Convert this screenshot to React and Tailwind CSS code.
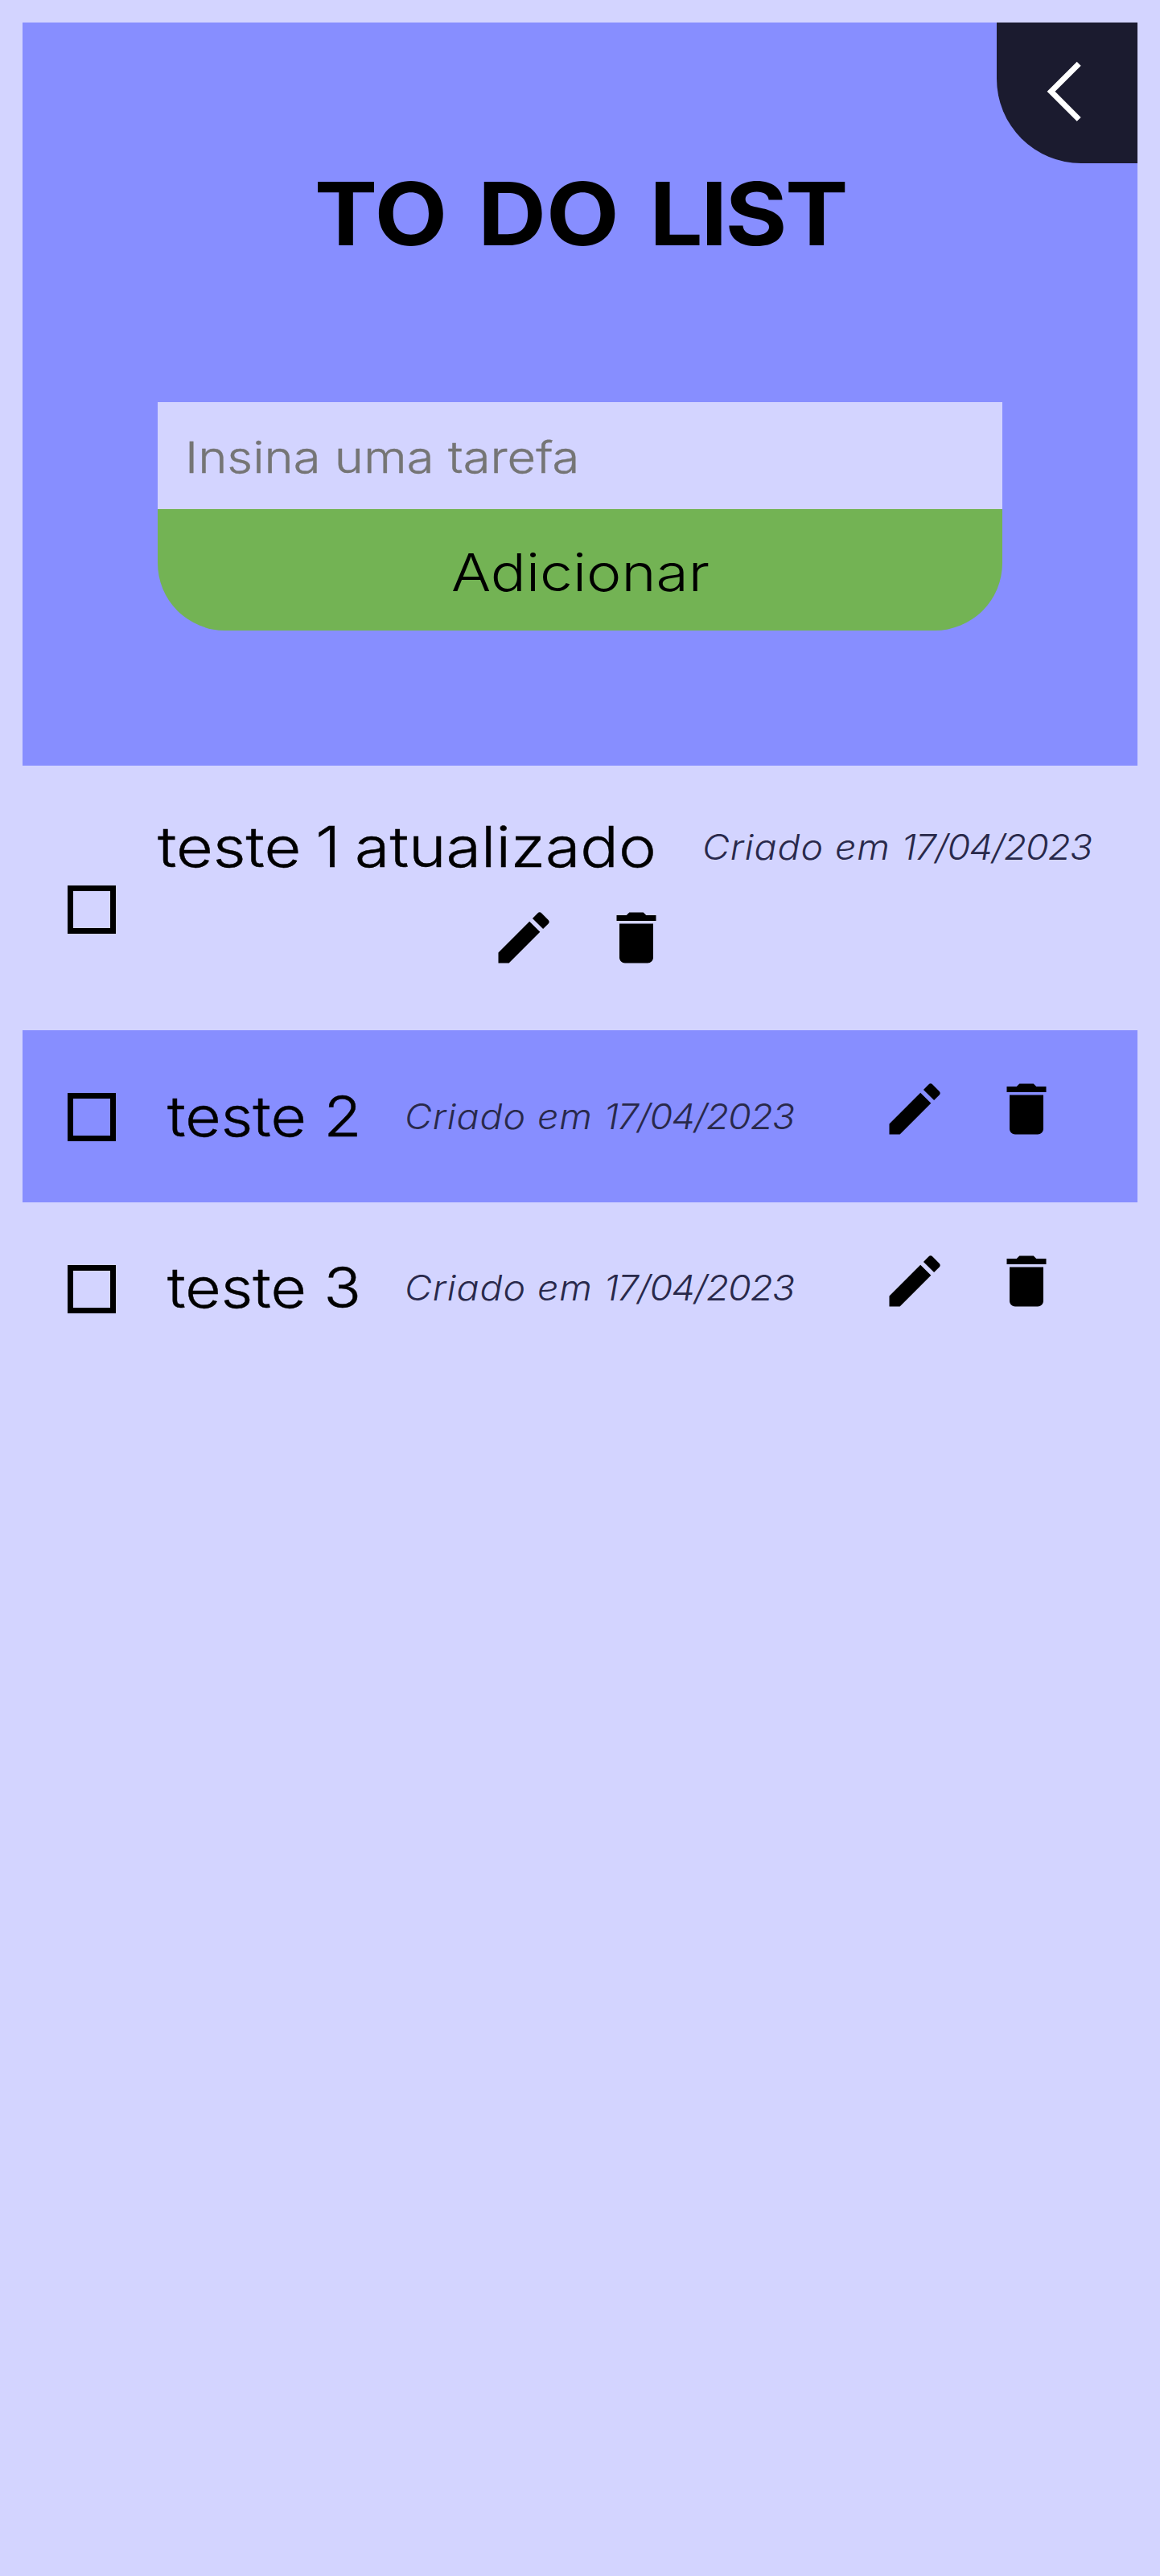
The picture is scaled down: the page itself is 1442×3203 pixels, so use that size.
import React from "react";
import { MdEdit, MdDelete } from "react-icons/md";

function Checkbox({ className }) {
  return (
    <button
      type="button"
      role="checkbox"
      aria-checked="false"
      className={"h-[60px] w-[60px] shrink-0 border-[7px] border-black " + className}
    />
  );
}

function TaskName({ children, width, scale }) {
  return (
    <div className={"shrink-0 " + width}>
      <span
        className={
          "inline-block origin-left whitespace-nowrap text-[70px] leading-[84px] font-light text-black [-webkit-text-stroke:0.5px_black] " +
          scale
        }
      >
        {children}
      </span>
    </div>
  );
}

function CreatedAt({ date }) {
  return (
    <div className="w-[484px] shrink-0">
      <span className="inline-block origin-left scale-x-[1.083] whitespace-nowrap text-[43px] leading-[54px] font-light text-[#29294b] italic">
        <span className="tracking-[0.8px]">Criado em </span>
        <span className="tracking-[-1.2px]">{date}</span>
      </span>
    </div>
  );
}

function Actions({ className }) {
  return (
    <div className={"flex text-black " + className}>
      <button type="button" aria-label="Editar">
        <MdEdit size={84} />
      </button>
      <button type="button" aria-label="Excluir">
        <MdDelete size={84} />
      </button>
    </div>
  );
}

function TaskRow({ name, date, className }) {
  return (
    <li className={"flex h-[213.5px] items-center pl-14 " + className}>
      <Checkbox className="mt-[3px]" />
      <div className="ml-[64px] flex items-center">
        <TaskName width="w-[295px]" scale="scale-x-[1.095]">
          {name}
        </TaskName>
        <CreatedAt date={date} />
      </div>
      <Actions className="mt-[-17px] ml-[107.5px] gap-[55.5px]" />
    </li>
  );
}

export default function App() {
  return (
    <div className="min-h-[3203px] w-[1442px] bg-[#d3d4ff] p-7 font-['Inter',sans-serif]">
      <header className="relative flex h-[924px] flex-col items-center bg-[#878eff] pt-[170px]">
        <button
          type="button"
          aria-label="Voltar"
          className="absolute top-0 right-0 h-[175px] w-[175px] rounded-bl-[105px] bg-[#1b1b2f]"
        >
          <svg viewBox="0 0 175 175" fill="none" stroke="#fff" strokeWidth="7">
            <path d="M102.2 51.2 67.6 85.8l34.6 34.6" />
          </svg>
        </button>

        <h1 className="scale-x-[1.09] text-[108px] leading-[136px] font-bold [word-spacing:9px] whitespace-nowrap text-black">
          TO DO <span className="tracking-[-2.5px]">LIST</span>
        </h1>

        <form className="mt-[166.4px] w-[1050px]">
          <div className="h-[133px] bg-[#d3d4ff] pl-[34px]">
            <input
              type="text"
              placeholder="Insina uma tarefa"
              className="h-[136px] w-[880px] origin-left scale-x-[1.14] bg-transparent text-[54px] font-light outline-none placeholder:text-[#757575] placeholder:[-webkit-text-stroke:0.4px_#757575]"
            />
          </div>
          <button type="button" className="h-[150.6px] w-full rounded-b-[84px] bg-[#73b354] text-black">
            <span className="inline-block scale-x-[1.135] pt-[6px] text-[64.5px] leading-[78px] font-light">Adicionar</span>
          </button>
        </form>
      </header>

      <ul>
        <li className="flex h-[329px] items-center pl-14">
          <Checkbox className="mt-[28px]" />
          <div className="ml-[52px] flex flex-col self-start pt-[58.5px]">
            <div className="flex items-center">
              <TaskName width="w-[677px]" scale="scale-x-[1.13] [word-spacing:-4px]">
                teste 1 atualizado
              </TaskName>
              <CreatedAt date="17/04/2023" />
            </div>
            <Actions className="mt-[29px] ml-[413px] gap-[56px]" />
          </div>
        </li>
        <TaskRow name="teste 2" date="17/04/2023" className="bg-[#878eff]" />
        <TaskRow name="teste 3" date="17/04/2023" className="" />
      </ul>
    </div>
  );
}
